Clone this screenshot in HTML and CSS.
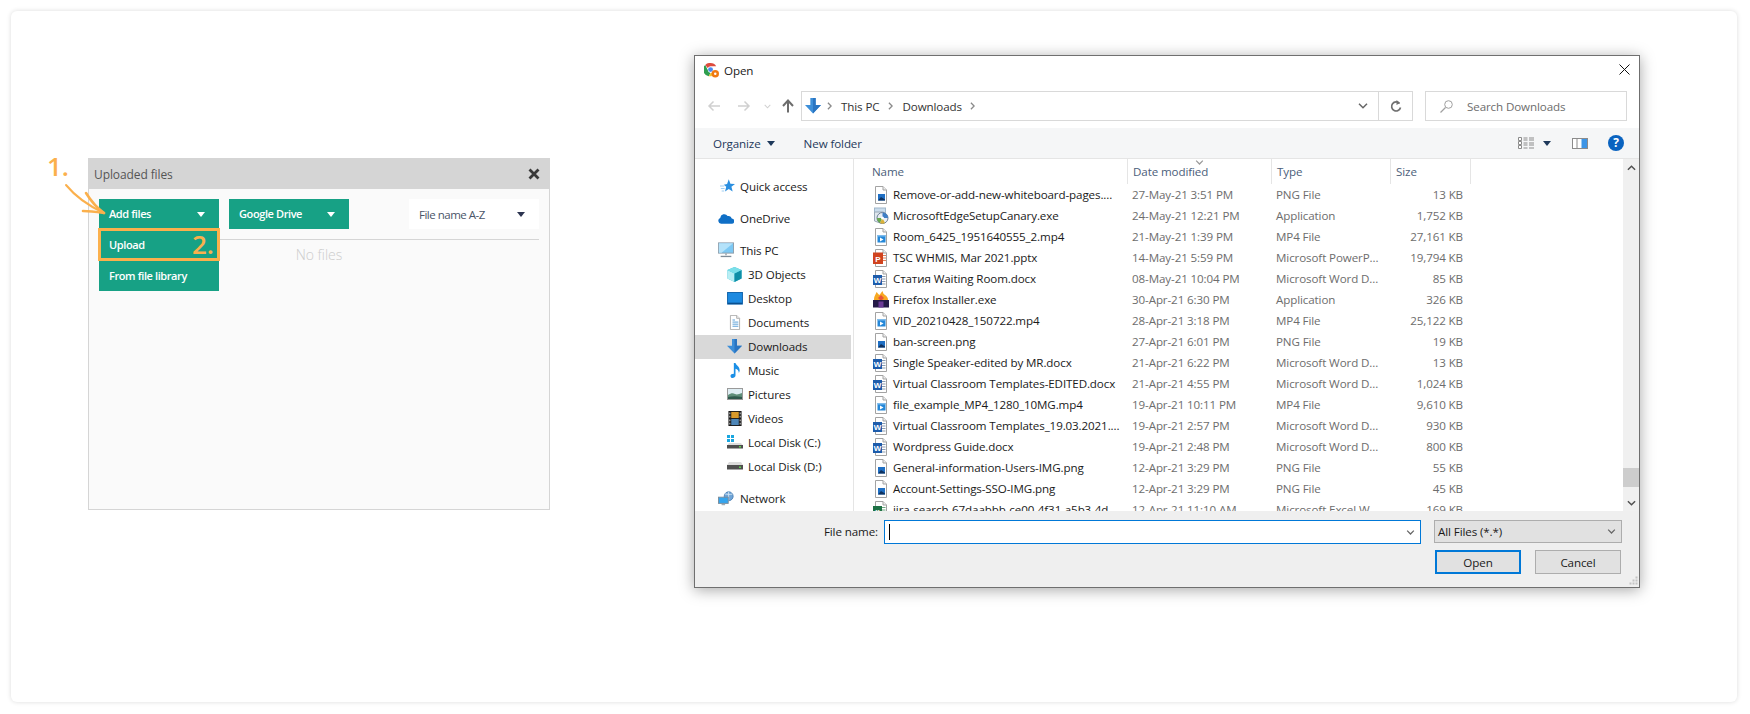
FILE: index.html
```html
<!DOCTYPE html>
<html lang="en">
<head>
<meta charset="utf-8">
<title>Upload files</title>
<link rel="stylesheet" href="styles.css">
</head>
<body>
<svg class="defs" aria-hidden="true">
  <defs>
    <symbol id="page" viewBox="0 0 16 18"><path d="M2.5.5h7.500l3.500 3.500v13.500h-11z" fill="#fff" stroke="#a3a3a3"/><path d="M10 .5v3.500h3.500" fill="#eee" stroke="#a3a3a3"/></symbol>
    <symbol id="png" viewBox="0 0 16 18"><use href="#page"/><rect x="5" y="8" width="7" height="6.500" fill="#1f6fc4"/><path d="M5 14.500l3-3.500 4 2.500v1z" fill="#10325f"/></symbol>
    <symbol id="mp4" viewBox="0 0 16 18"><use href="#page"/><rect x="4.500" y="7" width="8" height="7.500" fill="#2487d8"/><rect x="4.500" y="7" width="8" height="1.500" fill="#7dbbec"/><path d="M7 9.500l3.500 2-3.500 2z" fill="#fff"/></symbol>
    <symbol id="word" viewBox="0 0 16 18"><use href="#page"/><path d="M8 6.500h4.500M8 9h4.500M8 11.500h4.500M8 14h4.500" stroke="#8a9bb0"/><rect x="0" y="5" width="9" height="10" fill="#1d5cab"/><text x="4.500" y="12.800" class="ico-letter">W</text></symbol>
    <symbol id="ppt" viewBox="0 0 16 18"><use href="#page"/><path d="M10 6.500h3M10 9h3M10 11.500h3" stroke="#e0805a"/><rect x="0" y="3.500" width="10" height="11.500" fill="#d0431f"/><text x="5" y="12.500" class="ico-letter">P</text></symbol>
    <symbol id="xls" viewBox="0 0 16 18"><use href="#page"/><path d="M8 6.500h4.500M8 9h4.500M8 11.500h4.500M8 14h4.500" stroke="#6da67f"/><rect x="0" y="5" width="9" height="10" fill="#1e7145"/><text x="4.500" y="12.800" class="ico-letter">x</text></symbol>
    <symbol id="edge" viewBox="0 0 16 18"><rect x="1.500" y="1" width="11" height="5" fill="#c9dcec" stroke="#9fb6ca"/><path d="M1.500 5v9l7 2.500h2V5z" fill="#dfe7ee" stroke="#9aa9b6"/><circle cx="9.500" cy="11" r="5.500" fill="#e8edf4" stroke="#6e7f96"/><path d="M9.500 11L9.500 5.500A5.500 5.500 0 0 1 15 11z" fill="#3f7fc6"/><path d="M9.500 11H4a5.500 5.500 0 0 0 3 5z" fill="#69a84f"/><path d="M9.500 11l-2.500 5a5.500 5.500 0 0 0 5 0z" fill="#d9b13a"/><circle cx="9.500" cy="11" r="1.500" fill="#fff"/></symbol>
    <symbol id="firefox" viewBox="0 0 16 18"><path d="M1 8C1 5 3 3 3.500 1c1 1 2 2.500 3 3C7 3 8.500 1.500 9.500 0c.5 2 1 3 2.500 4 1.500 1 3 2.500 3 4.500V11H1z" fill="#f7a823"/><path d="M5 7l3-3 3 3-3 3z" fill="#e8543a"/><rect x="0" y="9" width="16" height="7.500" fill="#241a47"/><rect x="5.500" y="10.500" width="5" height="6" fill="#6b3a96"/></symbol>
    <symbol id="star" viewBox="0 0 18 16"><path d="M10.500 0l2 5.200 5.500.3-4.300 3.500 1.500 5.500L10.500 11.500 6 14.500l1.500-5.500L4.500 6.500l4-1z" fill="#2b8fe0"/><path d="M0 8h5M1 11h4.500M2 14h3" stroke="#8cc4ef"/></symbol>
    <symbol id="cloud" viewBox="0 0 18 12"><path d="M3.500 12A3.500 3.500 0 0 1 2.500 5.300 4.500 4.500 0 0 1 10.800 3.300 3.800 3.800 0 0 1 15.500 6 3 3 0 0 1 15 12z" fill="#0f6fc6"/></symbol>
    <symbol id="pc" viewBox="0 0 18 17"><rect x=".5" y=".5" width="17" height="11.500" fill="#7cc8f4" stroke="#8d9aa6"/><path d="M1 1h16L4 11.500H1z" fill="#b4e2fa"/><path d="M8 12h2v2.500H8z" fill="#aab3bb"/><path d="M3 15h12v1.500H3z" fill="#7f8c98"/></symbol>
    <symbol id="cube" viewBox="0 0 17 17"><path d="M8.500 0l8 3.500v9.500l-8 4-8-4V3.500z" fill="#3cc1d4"/><path d="M.5 3.500l8 4v9.500l-8-4z" fill="#b8eef4"/><path d="M8.500 7.500l8-4v9.500l-8 4z" fill="#0f8ea6"/><path d="M.5 3.500l8-3.500 8 3.500-8 4z" fill="#7adfe9"/></symbol>
    <symbol id="desk" viewBox="0 0 17 14"><rect x=".5" y=".5" width="16" height="12.500" fill="#1d8ae0" stroke="#0c5fa8"/><rect x="1" y="11.500" width="15" height="1.500" fill="#0b4f8d"/></symbol>
    <symbol id="docs" viewBox="0 0 16 18"><use href="#page"/><path d="M5 6h3M5 8.500h7M5 11h7M5 13.500h7" stroke="#3d8fd1"/></symbol>
    <symbol id="down" viewBox="0 0 18 18"><path d="M6 0h6v8h6l-9 9.500L0 8h6z" fill="#3d8fd9"/><path d="M9 0h3v8h6l-9 9.500z" fill="#2a75c2"/></symbol>
    <symbol id="music" viewBox="0 0 12 18"><path d="M4 0h2c.5 3 5 3.500 5 9 0 1-.5 2-1 3 0-3-2-4.500-4-5v8c0 2-2 3-3.500 3S0 17 0 15.500 1.500 13 4 13z" fill="#1b8fe6"/></symbol>
    <symbol id="pics" viewBox="0 0 16 12"><rect x=".5" y=".5" width="15" height="11" fill="#dfeef4" stroke="#9a9a9a"/><path d="M1 7c3-2 5-2 7-1s4 0 7-1v6H1z" fill="#5f8f7a"/><path d="M1 9c4-1 9-1 14 0v2H1z" fill="#2f5a4d"/></symbol>
    <symbol id="film" viewBox="0 0 14 16"><rect width="14" height="16" fill="#1a1a1a"/><rect x="3" y="1" width="8" height="6.500" fill="#d99a2b"/><rect x="3" y="8.500" width="8" height="6.500" fill="#4d86b8"/><path d="M1 1.500h1v2H1zM1 5h1v2H1zM1 9h1v2H1zM1 12.500h1v2H1zM12 1.500h1v2h-1zM12 5h1v2h-1zM12 9h1v2h-1zM12 12.500h1v2h-1z" fill="#ddd"/></symbol>
    <symbol id="diskc" viewBox="0 0 16 14"><path d="M0 0h3v3H0zM4 0h3v3H4zM0 4h3v3H0zM4 4h3v3H4z" fill="#1aa7e0"/><path d="M2 8h12l2 2.500H0z" fill="#dcdcdc"/><rect y="10" width="16" height="3.500" fill="#4f4f4f"/><rect x="12" y="11" width="2" height="1.500" fill="#5fd04f"/></symbol>
    <symbol id="diskd" viewBox="0 0 16 8"><path d="M2 0h12l2 3H0z" fill="#dcdcdc"/><rect y="3" width="16" height="4.500" fill="#4f4f4f"/><rect x="12" y="4.500" width="2" height="1.500" fill="#5fd04f"/></symbol>
    <symbol id="net" viewBox="0 0 18 16"><circle cx="12" cy="5.500" r="5" fill="#6fa5d8" stroke="#4a7eb2"/><path d="M8 3c3 0 5 1 8 0M12 .5v10" stroke="#d8e8f4" fill="none"/><rect x=".5" y="6.500" width="11" height="7" fill="#35a5ee" stroke="#7b8b98"/><path d="M4 14.500h4v1H4z" fill="#7b8b98"/></symbol>
    <symbol id="chevd" viewBox="0 0 10 6"><path d="M1 .8l4 4 4-4" fill="none" stroke="currentColor" stroke-width="1.500"/></symbol>
    <symbol id="chevr" viewBox="0 0 6 10"><path d="M1 1l4 4-4 4" fill="none" stroke="currentColor" stroke-width="1.600"/></symbol>
    <symbol id="tri" viewBox="0 0 8 5"><path d="M0 0h8L4 5z" fill="currentColor"/></symbol>
  </defs>
</svg>

<main class="card">
  <section class="panel">
    <span class="step step-one">1.</span>
    <svg class="arrow" viewBox="0 0 50 34" aria-hidden="true"><g fill="none" stroke="#fbb04c" stroke-linecap="round"><path d="M3 3C12 14 26 24 41 31" stroke-width="2"/><path d="M23 11C28 19 34 26 41 31" stroke-width="2.600"/><path d="M20 29C27 29 34 30 41 31" stroke-width="2.600"/></g></svg>
    <header class="panel-head">
      <span>Uploaded files</span>
      <svg class="panel-close" viewBox="0 0 12 12" aria-hidden="true"><path d="M1.500 1.500l9 9M10.500 1.500l-9 9" stroke="#3a3a3a" stroke-width="2.800"/></svg>
    </header>
    <div class="panel-body">
      <div class="panel-tools">
        <div class="add-wrap">
          <button class="tbtn"><span>Add files</span><svg class="tbtn-tri"><use href="#tri"/></svg></button>
          <ul class="menu">
            <li class="menu-item">Upload</li>
            <li class="menu-item">From file library</li>
          </ul>
          <div class="highlight"><span class="step step-two">2.</span></div>
        </div>
        <button class="tbtn"><span>Google Drive</span><svg class="tbtn-tri"><use href="#tri"/></svg></button>
        <div class="sort"><span>File name A-Z</span><svg class="sort-tri"><use href="#tri"/></svg></div>
      </div>
      <div class="panel-rule"></div>
      <p class="no-files">No files</p>
    </div>
  </section>

  <section class="dialog">
    <header class="titlebar">
      <div class="title-left">
        <svg class="app-icon" viewBox="0 0 16 16" aria-hidden="true">
          <path d="M7 0a7 7 0 0 1 6 3.500H7a3.500 3.500 0 0 0-3 1.800L1.300 2A7 7 0 0 1 7 0z" fill="#dd4b3e"/>
          <path d="M1.300 2L4 7.500a3.500 3.500 0 0 0 3 3.200L5 14A7 7 0 0 1 1.300 2z" fill="#2f9e4f"/>
          <path d="M5 14l2-3.300h3L8 14z" fill="#f2c230"/>
          <circle cx="7" cy="7" r="2.600" fill="#4a8af4"/>
          <circle cx="12" cy="11.500" r="4" fill="#f07a13"/>
          <circle cx="12" cy="11.500" r="1.300" fill="#fff"/>
        </svg>
        <span>Open</span>
      </div>
      <svg class="win-close" viewBox="0 0 11 11" aria-hidden="true"><path d="M.5.500l10 10M10.500.500l-10 10" stroke="#111" stroke-width="1"/></svg>
    </header>

    <nav class="navbar">
      <div class="nav-btns">
        <svg class="nav-ic" viewBox="0 0 14 12" aria-hidden="true"><path d="M13 6H2M6.500 1.500L2 6l4.500 4.500" fill="none" stroke="#d0d0d0" stroke-width="1.500"/></svg>
        <svg class="nav-ic" viewBox="0 0 14 12" aria-hidden="true"><path d="M1 6h11M7.500 1.500L12 6l-4.500 4.500" fill="none" stroke="#d0d0d0" stroke-width="1.500"/></svg>
        <svg class="nav-drop"><use href="#chevd"/></svg>
        <svg class="nav-up" viewBox="0 0 12 14" aria-hidden="true"><path d="M6 13.500V2M1 7l5-5.500L11 7" fill="none" stroke="#6d6d6d" stroke-width="2"/></svg>
      </div>
      <div class="address">
        <svg class="addr-ic"><use href="#down"/></svg>
        <svg class="crumb-sep"><use href="#chevr"/></svg><span class="crumb-name">This PC</span>
        <svg class="crumb-sep"><use href="#chevr"/></svg><span>Downloads</span>
        <svg class="crumb-sep"><use href="#chevr"/></svg>
        <span class="addr-fill"></span>
        <svg class="addr-chev"><use href="#chevd"/></svg>
        <span class="addr-refresh">
          <svg class="refresh" viewBox="0 0 12 13" aria-hidden="true"><path d="M9.500 3.500A4.500 4.500 0 1 0 10.500 7.500" fill="none" stroke="#707070" stroke-width="1.700"/><path d="M6.500 0v5l3.500-2z" fill="#707070"/></svg>
        </span>
      </div>
      <div class="search">
        <svg class="search-ic" viewBox="0 0 13 13" aria-hidden="true"><circle cx="8.500" cy="4.500" r="3.800" fill="none" stroke="#a0a0a0"/><path d="M5.500 7.500L.5 12.500" stroke="#a0a0a0" stroke-width="1.200"/></svg>
        <span>Search Downloads</span>
      </div>
    </nav>

    <div class="toolbar">
      <span class="tool">Organize<svg class="tool-tri"><use href="#tri"/></svg></span>
      <span class="tool tool-new">New folder</span>
      <span class="tool-fill"></span>
      <svg class="view-ic" viewBox="0 0 16 12" aria-hidden="true"><path d="M.5.500h3v3h-3zM.5 4.500h3v3h-3zM.5 8.500h3v3h-3z" fill="#fff" stroke="#8b8b8b"/><path d="M5.500 1h4M11 1h5M5.500 3h4M11 3h5M5.500 6h4M11 6h5M5.500 8h4M11 8h5M5.500 11h4M11 11h5" stroke="#8b8b8b"/></svg>
      <svg class="view-tri"><use href="#tri"/></svg>
      <svg class="pane-ic" viewBox="0 0 16 11" aria-hidden="true"><rect x=".5" y=".5" width="15" height="10" fill="#fff" stroke="#8b8b8b"/><rect x="9.500" y="1" width="5.500" height="9" fill="#3d95e6"/><path d="M5 1v9" stroke="#8b8b8b"/></svg>
      <span class="help">?</span>
    </div>

    <div class="browser">
      <aside class="side">
        <div class="side-row top"><svg class="si si-star"><use href="#star"/></svg>Quick access</div>
        <div class="side-row top gap"><svg class="si si-cloud"><use href="#cloud"/></svg>OneDrive</div>
        <div class="side-row top gap"><svg class="si si-pc"><use href="#pc"/></svg>This PC</div>
        <div class="side-row"><svg class="si si-box"><use href="#cube"/></svg>3D Objects</div>
        <div class="side-row"><svg class="si si-desk"><use href="#desk"/></svg>Desktop</div>
        <div class="side-row"><svg class="si si-docs"><use href="#docs"/></svg>Documents</div>
        <div class="side-row selected"><svg class="si si-box"><use href="#down"/></svg>Downloads</div>
        <div class="side-row"><svg class="si si-music"><use href="#music"/></svg>Music</div>
        <div class="side-row"><svg class="si si-pics"><use href="#pics"/></svg>Pictures</div>
        <div class="side-row"><svg class="si si-film"><use href="#film"/></svg>Videos</div>
        <div class="side-row"><svg class="si si-disk"><use href="#diskc"/></svg>Local Disk (C:)</div>
        <div class="side-row"><svg class="si si-diskd"><use href="#diskd"/></svg>Local Disk (D:)</div>
        <div class="side-row top gap"><svg class="si si-net"><use href="#net"/></svg>Network</div>
      </aside>

      <div class="files">
        <div class="cols cols-head">
          <span class="h-name">Name</span>
          <span class="h-cell">Date modified<svg class="sort-chev"><use href="#chevd"/></svg></span>
          <span class="h-cell">Type</span>
          <span class="h-cell h-last">Size</span>
        </div>
        <div class="rows">
          <div class="cols row"><span class="fname"><svg class="fi"><use href="#png"/></svg>Remove-or-add-new-whiteboard-pages....</span><span class="fmeta">27-May-21 3:51 PM</span><span class="fmeta">PNG File</span><span class="fsize">13 KB</span></div>
          <div class="cols row"><span class="fname"><svg class="fi"><use href="#edge"/></svg>MicrosoftEdgeSetupCanary.exe</span><span class="fmeta">24-May-21 12:21 PM</span><span class="fmeta">Application</span><span class="fsize">1,752 KB</span></div>
          <div class="cols row"><span class="fname"><svg class="fi"><use href="#mp4"/></svg>Room_6425_1951640555_2.mp4</span><span class="fmeta">21-May-21 1:39 PM</span><span class="fmeta">MP4 File</span><span class="fsize">27,161 KB</span></div>
          <div class="cols row"><span class="fname"><svg class="fi"><use href="#ppt"/></svg>TSC WHMIS, Mar 2021.pptx</span><span class="fmeta">14-May-21 5:59 PM</span><span class="fmeta">Microsoft PowerP...</span><span class="fsize">19,794 KB</span></div>
          <div class="cols row"><span class="fname"><svg class="fi"><use href="#word"/></svg>Статия Waiting Room.docx</span><span class="fmeta">08-May-21 10:04 PM</span><span class="fmeta">Microsoft Word D...</span><span class="fsize">85 KB</span></div>
          <div class="cols row"><span class="fname"><svg class="fi"><use href="#firefox"/></svg>Firefox Installer.exe</span><span class="fmeta">30-Apr-21 6:30 PM</span><span class="fmeta">Application</span><span class="fsize">326 KB</span></div>
          <div class="cols row"><span class="fname"><svg class="fi"><use href="#mp4"/></svg>VID_20210428_150722.mp4</span><span class="fmeta">28-Apr-21 3:18 PM</span><span class="fmeta">MP4 File</span><span class="fsize">25,122 KB</span></div>
          <div class="cols row"><span class="fname"><svg class="fi"><use href="#png"/></svg>ban-screen.png</span><span class="fmeta">27-Apr-21 6:01 PM</span><span class="fmeta">PNG File</span><span class="fsize">19 KB</span></div>
          <div class="cols row"><span class="fname"><svg class="fi"><use href="#word"/></svg>Single Speaker-edited by MR.docx</span><span class="fmeta">21-Apr-21 6:22 PM</span><span class="fmeta">Microsoft Word D...</span><span class="fsize">13 KB</span></div>
          <div class="cols row"><span class="fname"><svg class="fi"><use href="#word"/></svg>Virtual Classroom Templates-EDITED.docx</span><span class="fmeta">21-Apr-21 4:55 PM</span><span class="fmeta">Microsoft Word D...</span><span class="fsize">1,024 KB</span></div>
          <div class="cols row"><span class="fname"><svg class="fi"><use href="#mp4"/></svg>file_example_MP4_1280_10MG.mp4</span><span class="fmeta">19-Apr-21 10:11 PM</span><span class="fmeta">MP4 File</span><span class="fsize">9,610 KB</span></div>
          <div class="cols row"><span class="fname"><svg class="fi"><use href="#word"/></svg>Virtual Classroom Templates_19.03.2021....</span><span class="fmeta">19-Apr-21 2:57 PM</span><span class="fmeta">Microsoft Word D...</span><span class="fsize">930 KB</span></div>
          <div class="cols row"><span class="fname"><svg class="fi"><use href="#word"/></svg>Wordpress Guide.docx</span><span class="fmeta">19-Apr-21 2:48 PM</span><span class="fmeta">Microsoft Word D...</span><span class="fsize">800 KB</span></div>
          <div class="cols row"><span class="fname"><svg class="fi"><use href="#png"/></svg>General-information-Users-IMG.png</span><span class="fmeta">12-Apr-21 3:29 PM</span><span class="fmeta">PNG File</span><span class="fsize">55 KB</span></div>
          <div class="cols row"><span class="fname"><svg class="fi"><use href="#png"/></svg>Account-Settings-SSO-IMG.png</span><span class="fmeta">12-Apr-21 3:29 PM</span><span class="fmeta">PNG File</span><span class="fsize">45 KB</span></div>
          <div class="cols row"><span class="fname"><svg class="fi"><use href="#xls"/></svg>jira-search-67daabbb-ce00-4f31-a5b3-4d...</span><span class="fmeta">12-Apr-21 11:10 AM</span><span class="fmeta">Microsoft Excel W...</span><span class="fsize">169 KB</span></div>
        </div>
      </div>

      <div class="scroll">
        <svg class="sb-up" viewBox="0 0 10 6" aria-hidden="true"><path d="M1 5l4-4 4 4" fill="none" stroke="#505050" stroke-width="1.600"/></svg>
        <div class="sb-track"><div class="sb-thumb"></div></div>
        <svg class="sb-down" viewBox="0 0 10 6" aria-hidden="true"><path d="M1 1l4 4 4-4" fill="none" stroke="#505050" stroke-width="1.600"/></svg>
      </div>
    </div>

    <footer class="foot">
      <div class="foot-row">
        <label class="foot-label">File name:</label>
        <div class="fname-input"><span class="caret"></span><svg class="in-chev"><use href="#chevd"/></svg></div>
        <div class="filter"><span>All Files (*.*)</span><svg class="in-chev"><use href="#chevd"/></svg></div>
      </div>
      <div class="foot-btns">
        <button class="wbtn wbtn-def">Open</button>
        <button class="wbtn">Cancel</button>
      </div>
      <svg class="grip" viewBox="0 0 9 9" aria-hidden="true"><path d="M6.500.5h2v2h-2zM3.500 3.500h2v2h-2zM6.500 3.500h2v2h-2zM.5 6.500h2v2h-2zM3.500 6.500h2v2h-2zM6.500 6.500h2v2h-2z" fill="#c4c4c4"/></svg>
    </footer>
  </section>
</main>
</body>
</html>
```

FILE: styles.css
```css
* { box-sizing: border-box; }
html, body { margin: 0; padding: 0; height: 714px; overflow: hidden; background: #fff; }
body { font-family: "Open Sans", "Noto Sans", sans-serif; }
.defs { position: absolute; width: 0; height: 0; }
svg { display: block; color: inherit; }

.card {
  margin: 11px 13px 0 11px;
  height: 691px;
  background: #fff;
  border-radius: 6px;
  box-shadow: 0 0 5px rgba(0, 0, 0, .14);
  display: flex;
  align-items: flex-start;
}

/* Uploaded files panel */
.panel {
  position: relative;
  width: 462px;
  height: 352px;
  margin: 147px 0 0 77px;
  background: #fafafa;
  border: 1px solid #d5d5d5;
  border-top: 0;
  display: flex;
  flex-direction: column;
  color: #444;
  font-size: 12px;
}
.panel-head {
  height: 31px;
  margin: 0 -1px;
  padding: 1px 10px 0 6px;
  background: #d5d5d5;
  display: flex;
  align-items: center;
  justify-content: space-between;
  color: #555;
  letter-spacing: -0.1px;
}
.panel-close { width: 12px; height: 12px; margin-top: -1px; }
.panel-body { padding: 10px 10px 0 10px; flex: 1; display: flex; flex-direction: column; }
.panel-tools { display: flex; align-items: flex-start; gap: 10px; }
.add-wrap { position: relative; width: 120px; }
.tbtn {
  width: 120px;
  height: 30px;
  padding: 0 14px 2px 10px;
  border: 0;
  background: #17a185;
  color: #fff;
  font: 600 11px "Open Sans", sans-serif;
  letter-spacing: -0.4px;
  display: flex;
  align-items: center;
  justify-content: space-between;
}
.tbtn-tri { width: 8px; height: 5px; color: #fff; margin-top: 2px; }
.menu { position: absolute; top: 30px; left: 0; width: 120px; margin: 0; padding: 0; list-style: none; background: #17a185; z-index: 1; }
.menu-item { height: 31px; padding-left: 10px; color: #fff; font-weight: 600; font-size: 11px; letter-spacing: -0.4px; line-height: 31px; }
.highlight {
  position: absolute;
  top: 29px;
  left: -1px;
  width: 122px;
  height: 33px;
  border: 3px solid #fbb04c;
  z-index: 2;
}
.step { position: absolute; color: #fbb04c; font-weight: 600; line-height: 1; }
.step-one { left: -42px; top: -5px; font-size: 26px; }
.step-two { right: 3px; top: 0; font-size: 26px; }
.arrow { position: absolute; left: -26px; top: 24px; width: 50px; height: 34px; z-index: 3; }
.sort {
  margin-left: 50px;
  width: 130px;
  height: 30px;
  padding: 0 14px 0 10px;
  background: #fff;
  display: flex;
  align-items: center;
  justify-content: space-between;
  font-size: 11.500px;
  letter-spacing: -0.5px;
  color: #4a5568;
}
.sort-tri { width: 8px; height: 5px; color: #2c3450; }
.panel-rule { height: 1px; margin: 10px 0 0 120px; background: #d5d5d5; }
.no-files { margin: 5px 0 0 0; text-align: center; color: #ccc; font-size: 14px; font-weight: 300; line-height: 20px; }

/* Open dialog */
.dialog {
  position: relative;
  width: 946px;
  height: 533px;
  margin: 44px 0 0 144px;
  background: #fff;
  border: 1px solid #6f6f6f;
  box-shadow: 0 2px 14px rgba(0, 0, 0, .35);
  display: flex;
  flex-direction: column;
  font-size: 11.600px;
  letter-spacing: -0.11px;
  color: #1a1a1a;
}
.titlebar { height: 29px; flex: none; padding: 0 9px 0 9px; display: flex; align-items: center; justify-content: space-between; }
.title-left { display: flex; align-items: center; gap: 5px; }
.app-icon { width: 15px; height: 15px; }
.win-close { width: 11px; height: 11px; margin-top: -2px; }

.navbar { height: 43px; flex: none; padding: 6px 12px 7px 0; display: flex; align-items: stretch; }
.nav-btns { width: 106px; flex: none; display: flex; align-items: center; }
.nav-ic { width: 14px; height: 12px; margin-left: 12px; }
.nav-ic + .nav-ic { margin-left: 16px; }
.nav-drop { width: 7px; height: 5px; margin-left: 13px; color: #d0d0d0; }
.nav-up { width: 12px; height: 14px; margin-left: 11px; }
.address {
  width: 612px;
  flex: none;
  border: 1px solid #d9d9d9;
  display: flex;
  align-items: center;
  color: #333;
}
.addr-ic { width: 16px; height: 16px; margin: 0 -2px 0 3px; color: #3d8fd9; }
.crumb-sep { width: 5px; height: 8px; margin: 0 9px 0 8px; color: #8a8a8a; }
.crumb-name { margin-right: 1px; }
.addr-fill { flex: 1; }
.addr-chev { width: 10px; height: 6px; margin-right: 10px; color: #666; }
.addr-refresh { width: 34px; height: 100%; border-left: 1px solid #d9d9d9; display: flex; align-items: center; justify-content: center; }
.refresh { width: 12px; height: 13px; }
.search {
  width: 202px;
  margin-left: 12px;
  flex: none;
  border: 1px solid #d9d9d9;
  display: flex;
  align-items: center;
  color: #6d6d6d;
}
.search-ic { width: 13px; height: 13px; margin: 0 14px 0 14px; }

.toolbar {
  height: 31px;
  flex: none;
  padding-left: 18px;
  background: #f5f6f7;
  border-bottom: 1px solid #e5e5e5;
  display: flex;
  align-items: center;
  color: #1e395b;
}
.tool { display: flex; align-items: center; }
.tool-tri { width: 8px; height: 5px; margin-left: 6px; }
.tool-new { margin-left: 29px; }
.tool-fill { flex: 1; }
.view-ic { width: 16px; height: 12px; }
.view-tri { width: 8px; height: 5px; margin-left: 9px; }
.pane-ic { width: 16px; height: 11px; margin-left: 21px; }
.help {
  width: 16px;
  height: 16px;
  margin: 0 15px 0 20px;
  border-radius: 50%;
  background: #0a63c0;
  color: #fff;
  font-weight: 700;
  font-size: 12px;
  line-height: 16px;
  text-align: center;
}

.browser { flex: 1; min-height: 0; display: flex; overflow: hidden; }
.side { width: 159px; flex: none; padding: 16px 2px 0 0; border-right: 1px solid #e5e5e5; overflow: hidden; }
.side-row { height: 24px; padding: 0 0 2px 53px; display: flex; align-items: center; position: relative; white-space: nowrap; }
.side-row.top { padding-left: 45px; }
.side-row.gap { margin-top: 8px; }
.side-row.selected { background: #d9d9d9; }
.si { position: absolute; }
.si-star { left: 25px; width: 15px; height: 14px; }
.si-cloud { left: 23px; width: 16px; height: 11px; }
.si-pc { left: 23px; width: 16px; height: 16px; }
.si-box { left: 32px; width: 15px; height: 15px; }
.si-desk { left: 32px; width: 16px; height: 13px; }
.si-docs { left: 33px; width: 14px; height: 15px; }
.si-music { left: 35px; width: 11px; height: 15px; }
.si-pics { left: 32px; width: 16px; height: 12px; }
.si-film { left: 33px; width: 14px; height: 15px; }
.si-disk { left: 32px; width: 16px; height: 14px; }
.si-diskd { left: 32px; width: 16px; height: 8px; }
.si-net { left: 23px; width: 16px; height: 15px; }

.files { width: 769px; flex: none; overflow: hidden; display: flex; flex-direction: column; }
.cols { display: grid; grid-template-columns: 273px 144px 119px 81px; }
.cols-head { height: 25px; flex: none; color: #4c607a; }
.cols-head > span { display: flex; align-items: center; }
.h-name { padding-left: 18px; }
.h-cell { position: relative; padding-left: 5px; border-left: 1px solid #e5e5e5; }
.h-last { border-right: 1px solid #e5e5e5; }
.sort-chev { position: absolute; left: 67px; top: 1px; width: 9px; height: 5px; color: #9a9a9a; }
.rows { flex: 1; min-height: 0; overflow: hidden; }
.row { height: 21px; align-items: center; white-space: nowrap; }
.fname { padding-left: 19px; display: flex; align-items: center; gap: 4px; overflow: hidden; }
.fi { width: 16px; height: 18px; flex: none; }
.ico-letter { font: 700 8px "Liberation Sans", sans-serif; letter-spacing: 0; fill: #fff; text-anchor: middle; }
.fmeta { padding-left: 5px; color: #6d6d6d; }
.fsize { padding-right: 8px; text-align: right; color: #6d6d6d; }

.scroll { width: 16px; flex: none; background: #f0f0f0; display: flex; flex-direction: column; align-items: center; }
.sb-up, .sb-down { width: 9px; height: 6px; flex: none; }
.sb-up { margin: 6px 0 6px; }
.sb-down { margin: 5px 0 5px; }
.sb-track { flex: 1; width: 100%; }
.sb-thumb { width: 100%; height: 19px; margin-top: 291px; background: #cdcdcd; }

.foot { position: relative; height: 76px; flex: none; padding: 9px 0 0 0; background: #efefef; }
.foot-row { display: flex; align-items: flex-start; }
.foot-label { width: 183px; height: 24px; margin-right: 6px; text-align: right; line-height: 24px; }
.fname-input {
  width: 537px;
  height: 24px;
  background: #fff;
  border: 1px solid #0078d7;
  display: flex;
  align-items: center;
  justify-content: space-between;
  padding: 0 5px 0 4px;
}
.caret { width: 1px; height: 16px; background: #000; }
.in-chev { width: 9px; height: 5px; color: #666; }
.filter {
  width: 188px;
  height: 23px;
  margin-left: 13px;
  padding: 0 5px 0 3px;
  background: #e1e1e1;
  border: 1px solid #adadad;
  display: flex;
  align-items: center;
  justify-content: space-between;
}
.foot-btns { display: flex; justify-content: flex-end; gap: 14px; padding-right: 18px; margin-top: 6px; }
.wbtn {
  width: 86px;
  height: 24px;
  padding: 0;
  background: #e1e1e1;
  border: 1px solid #adadad;
  color: #1a1a1a;
  font: 11.600px "Open Sans", sans-serif;
  letter-spacing: -0.11px;
}
.wbtn-def { border: 2px solid #0078d7; }
.grip { position: absolute; right: 1px; bottom: 2px; width: 9px; height: 9px; }
```
